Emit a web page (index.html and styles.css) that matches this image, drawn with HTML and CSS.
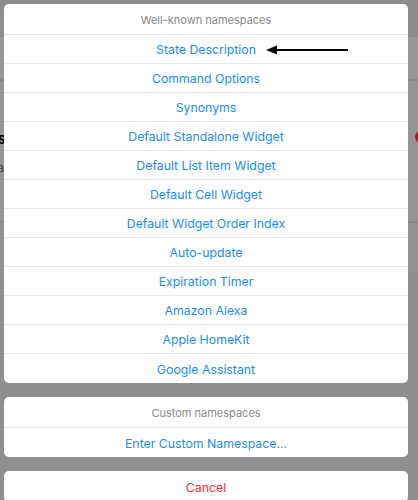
FILE: index.html
```html
<!DOCTYPE html>
<html>
<head>
<meta charset="utf-8">
<link rel="stylesheet" href="styles.css">
</head>
<body>
<div class="backdrop">
  <span class="bg-title">Others</span>
  <span class="bg-sub">Data</span>
  <span class="bg-dot"></span>
</div>
<div class="sheet">
  <div class="card">
    <div class="card-header">Well-known namespaces</div>
    <div class="row row-arrow">State Description
      <svg class="arrow" width="84" height="12" viewBox="0 0 84 12"><path d="M10 6 H82" stroke="#000" stroke-width="2"/><path d="M0 6 L11 1.5 L11 10.5 Z" fill="#000"/></svg>
    </div>
    <div class="row">Command Options</div>
    <div class="row">Synonyms</div>
    <div class="row">Default Standalone Widget</div>
    <div class="row">Default List Item Widget</div>
    <div class="row">Default Cell Widget</div>
    <div class="row">Default Widget Order Index</div>
    <div class="row">Auto-update</div>
    <div class="row">Expiration Timer</div>
    <div class="row">Amazon Alexa</div>
    <div class="row">Apple HomeKit</div>
    <div class="row">Google Assistant</div>
  </div>
  <div class="card">
    <div class="card-header">Custom namespaces</div>
    <div class="row">Enter Custom Namespace...</div>
  </div>
  <div class="card">
    <div class="row row-cancel">Cancel</div>
  </div>
</div>
</body>
</html>
```
FILE: styles.css
```css
html, body {
  margin: 0;
  padding: 0;
}
body {
  width: 418px;
  height: 500px;
  overflow: hidden;
  position: relative;
  font-family: "Inter", "Liberation Sans", sans-serif;
  background: linear-gradient(to bottom,
    #8d8d8d 0px, #8d8d8d 37px,
    #979797 37px, #979797 79px,
    #888888 79px, #888888 81px,
    #959595 81px, #959595 221px,
    #888888 221px, #888888 223px,
    #939393 223px, #939393 273px,
    #8f8f8f 273px, #8f8f8f 500px);
}
.backdrop {
  position: absolute;
  inset: 0;
}
.bg-title {
  position: absolute;
  left: -44px;
  top: 129px;
  font-size: 15px;
  font-weight: 700;
  color: #000;
}
.bg-sub {
  position: absolute;
  left: -22px;
  top: 160px;
  font-size: 12px;
  color: #444;
}
.bg-dot {
  position: absolute;
  left: 415px;
  top: 131px;
  width: 12px;
  height: 12px;
  border-radius: 50%;
  background: #a8201e;
}
.sheet {
  position: relative;
  z-index: 1;
  padding: 4px 10px 0 4px;
  display: flex;
  flex-direction: column;
  gap: 14px;
}
.card {
  background: #fff;
  border-radius: 5px;
  overflow: hidden;
  display: flex;
  flex-direction: column;
}
.card-header {
  height: 29px;
  padding-top: 1px;
  box-sizing: content-box;
  border-bottom: 1px solid #e8e8e8;
  display: flex;
  align-items: center;
  justify-content: center;
  font-size: 11px;
  color: #8a8a8a;
}
.row {
  height: 27px;
  padding-top: 1px;
  border-bottom: 1px solid #e8e8e8;
  display: flex;
  align-items: center;
  justify-content: center;
  font-size: 12.3px;
  color: #1a8cf0;
  position: relative;
}
.row:last-child {
  border-bottom: none;
  height: 28px;
}
.row-cancel {
  color: #f2302b;
}
.row-cancel:last-child {
  height: 30px;
}
.arrow {
  position: absolute;
  left: 262px;
  top: 9px;
}
```
